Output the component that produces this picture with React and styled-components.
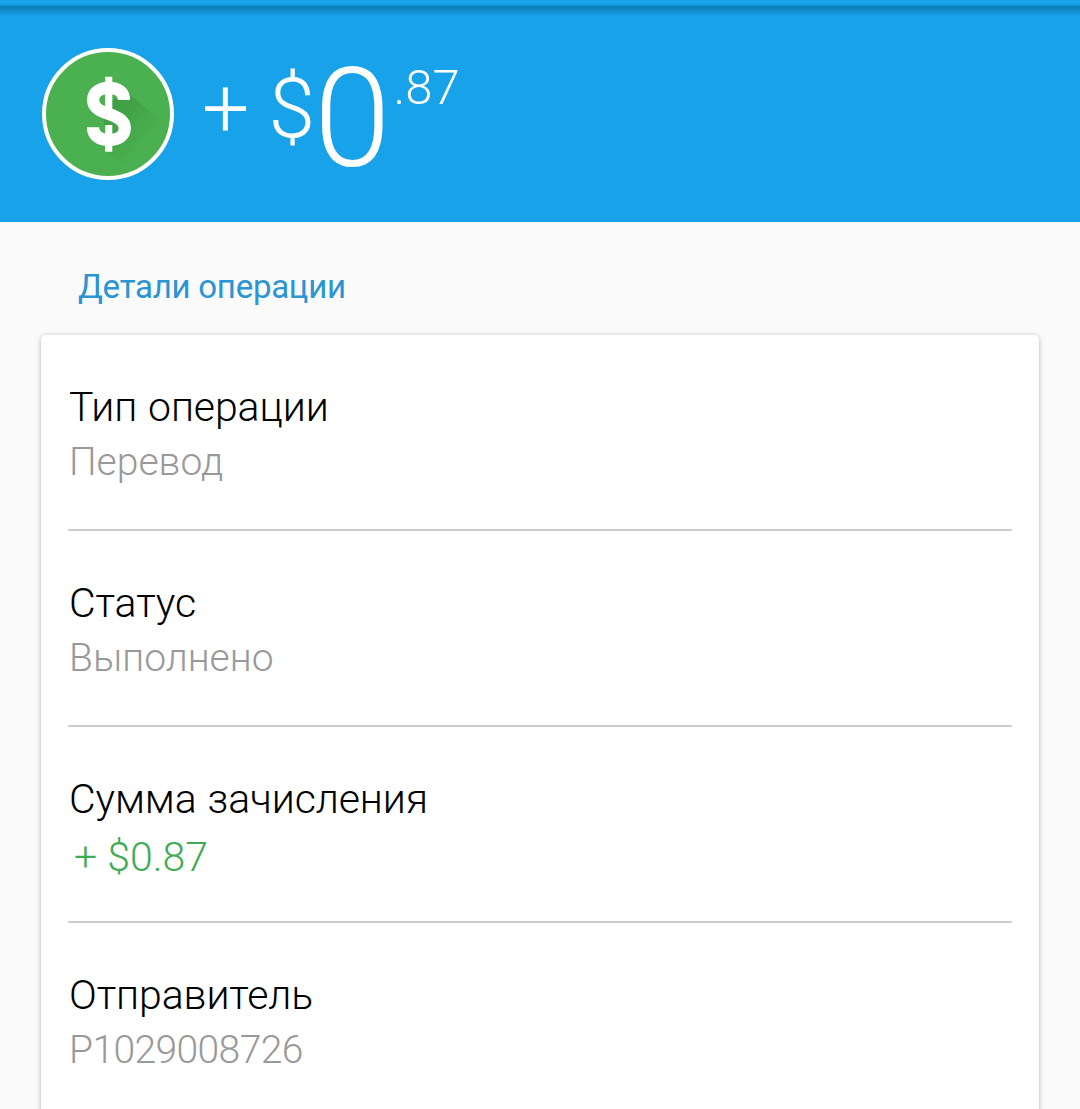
import React from 'react'
import styled, { createGlobalStyle } from 'styled-components'

const rows = [
  { label: 'Тип операции', value: 'Перевод' },
  { label: 'Статус', value: 'Выполнено' },
  { label: 'Сумма зачисления', value: '+ $0.87', income: true },
  { label: 'Отправитель', value: 'P1029008726', numeric: true },
]

const CoinIcon = () => (
  <Coin viewBox='0 0 132 132'>
    <defs>
      <linearGradient id='shade' gradientUnits='userSpaceOnUse' x1='70' y1='70' x2='102' y2='98'>
        <stop offset='0' stopColor='#2f8a38' stopOpacity='0.42' />
        <stop offset='1' stopColor='#2f8a38' stopOpacity='0' />
      </linearGradient>
    </defs>
    <circle cx='66' cy='66' r='64' fill='#4bb04f' stroke='#fff' strokeWidth='4' />
    <path d='M84 43L122 76L84 122L66 104L60 60Z' fill='url(#shade)' />
    <path
      d='M82 52C82 44 76 39.8 67 39.8C58 39.8 51.1 44 51.1 52C51.1 60 58 62.8 67 66C76 69.2 82.8 72.5 82.8 80C82.8 88 76 92 67 92C57.5 92 51 88 51 79.3'
      fill='none'
      stroke='#fff'
      strokeWidth='12.2'
    />
    <path d='M66.7 28.7V62M66.7 77V103.7' stroke='#fff' strokeWidth='7.2' />
  </Coin>
)

const App = () => {
  return (
    <Page>
      <GlobalStyle />
      <Header>
        <CoinIcon />
        <Amount>
          <Sign>+</Sign>
          <Currency>$</Currency>
          <Whole>0</Whole>
          <Cents>.87</Cents>
        </Amount>
      </Header>
      <SectionTitle>Детали операции</SectionTitle>
      <Card>
        {rows.map(({ label, value, income, numeric }) => (
          <Row key={label}>
            <Label>{label}</Label>
            {income ? <Income>{value}</Income> : <Value $numeric={numeric}>{value}</Value>}
          </Row>
        ))}
      </Card>
    </Page>
  )
}

export default App

const GlobalStyle = createGlobalStyle`
* {
  box-sizing: border-box;
}
body {
  margin: 0;
  background: #fafafa;
  font-family: Roboto, sans-serif;
}
`

const Page = styled.main`
height: 1109px;
overflow: hidden;
background: #fafafa;
`

const Header = styled.header`
display: flex;
align-items: flex-start;
height: 222px;
padding: 48px 42px 0;
color: #fff;
background: linear-gradient(#17a2ea 3px, #1593d6 6px, #0b7db6 6px, #128dcc 11px, #17a2ea 16px);
`

const Coin = styled.svg`
width: 132px;
height: 132px;
flex: none;
`

const Amount = styled.div`
display: flex;
align-items: flex-start;
font-weight: 300;
line-height: 1;
`

const Sign = styled.span`
margin: 19px 0 0 28px;
font-size: 84px;
`

const Currency = styled.span`
margin: 19px 0 0 19px;
font-size: 84px;
`

const Whole = styled.span`
margin: 2px 0 0 -1px;
font-size: 138px;
`

const Cents = styled.span`
margin: 15px 0 0 3px;
font-size: 49px;
`

const SectionTitle = styled.h2`
margin: 0;
padding: 45px 78px 0;
height: 113px;
font-size: 33px;
font-weight: 400;
line-height: 40px;
letter-spacing: -0.25px;
color: #2b94d2;
`

const Card = styled.section`
margin: 0 41px;
padding: 0 27px;
height: 850px;
background: #fff;
border-radius: 5px;
box-shadow: 0 1px 5px rgba(0, 0, 0, 0.3);
`

const Row = styled.div`
height: 196px;
padding-top: 48px;
border-bottom: 2px solid #cacbcd;
`

const Label = styled.div`
padding-left: 1px;
font-size: 41px;
font-weight: 300;
line-height: 48px;
letter-spacing: -0.1px;
word-spacing: 1px;
color: #000;
`

const Value = styled.div`
padding: 1px 0 0 1px;
font-size: 39px;
font-weight: 300;
line-height: 60px;
letter-spacing: ${({ $numeric }) => ($numeric ? '-0.6px' : '0')};
color: #999;
`

const Income = styled(Value)`
padding: 4px 0 0 6px;
font-size: 41px;
color: #3fac55;
`
